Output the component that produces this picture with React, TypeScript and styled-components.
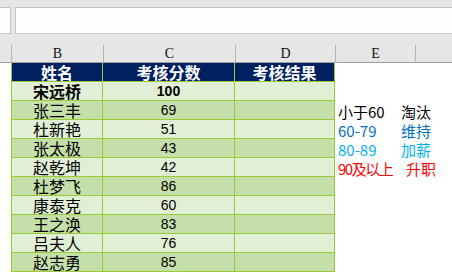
import React from 'react';
import styled, {createGlobalStyle} from 'styled-components';

const GlobalStyle = createGlobalStyle`
    html, body {
        margin: 0;
        padding: 0;
        background: #ffffff;
        overflow: hidden;
    }
    body {
        font-family: "Noto Sans CJK SC", "Liberation Sans", sans-serif;
    }
`

const COLS = '11px 92px 132px 100px 80px 1fr';
const GRID_GREEN = '#9acd32';

const Toolbar = styled.div`
    height: 45px;
    background: #e6e6e6;
    display: flex;
    align-items: flex-start;
    gap: 4px;
    padding-top: 7px;
    box-sizing: border-box;
`

const InputBox = styled.div<{$grow?: boolean}>`
    height: 27px;
    box-sizing: border-box;
    background: #fdfdfd;
    border: 1px solid #c6c6c6;
    ${p => p.$grow ? 'flex: 1; border-right: none;' : 'width: 11px; border-left: none;'}
`

const ColHeader = styled.div`
    display: grid;
    grid-template-columns: ${COLS};
    height: 18px;
    background: #e6e6e6;
    border-bottom: 1px solid #9f9f9f;
    box-sizing: border-box;
`

const ColLetter = styled.div`
    border-left: 1px solid #b4b4b4;
    font-family: "Liberation Serif", "DejaVu Serif", serif;
    font-size: 14px;
    color: #111111;
    text-align: center;
    line-height: 18px;
    &:first-child {
        border-left: none;
    }
`

const Sheet = styled.div`
    display: grid;
    grid-template-columns: ${COLS};
    grid-auto-rows: 19px;
`

const RowHead = styled.div`
    background: #ffffff;
`

const Cell = styled.div<{$head?: boolean; $shade?: boolean; $first?: boolean}>`
    box-sizing: border-box;
    border-right: 1px solid ${GRID_GREEN};
    border-bottom: 1px solid ${GRID_GREEN};
    ${p => p.$first && `border-left: 1px solid ${GRID_GREEN};`}
    background: ${p => p.$head ? '#002060' : p.$shade ? '#c4dfa9' : '#e0efd6'};
    color: ${p => p.$head ? '#ffffff' : '#000000'};
    display: flex;
    align-items: center;
    justify-content: center;
    white-space: nowrap;
    overflow: hidden;
`

const NameText = styled.span<{$bold?: boolean}>`
    font-family: "Noto Sans CJK SC", sans-serif;
    font-size: 16px;
    font-weight: ${p => p.$bold ? 700 : 400};
    line-height: 1;
`

const NumText = styled.span<{$bold?: boolean}>`
    font-family: "Liberation Sans", "DejaVu Sans", sans-serif;
    font-size: 14px;
    font-weight: ${p => p.$bold ? 700 : 400};
    line-height: 1;
`

const Legend = styled.div<{$color: string}>`
    grid-column: span 2;
    display: flex;
    align-items: flex-end;
    padding: 0 0 1px 3px;
    box-sizing: border-box;
    color: ${p => p.$color};
    font-family: "Noto Sans CJK SC", sans-serif;
    font-size: 15px;
    line-height: 1;
    white-space: nowrap;
`

const LegendRange = styled.span<{$tight?: boolean}>`
    display: inline-block;
    min-width: 63px;
    ${p => p.$tight && 'letter-spacing: -1.5px; padding-right: 5px;'}
`

const people = [
    {name: '宋远桥', score: 100},
    {name: '张三丰', score: 69},
    {name: '杜新艳', score: 51},
    {name: '张太极', score: 43},
    {name: '赵乾坤', score: 42},
    {name: '杜梦飞', score: 86},
    {name: '康泰克', score: 60},
    {name: '王之涣', score: 83},
    {name: '吕夫人', score: 76},
    {name: '赵志勇', score: 85},
];

const legend: Record<number, {range: string; label: string; color: string; tight?: boolean}> = {
    1: {range: '小于60', label: '淘汰', color: '#000000'},
    2: {range: '60-79', label: '维持', color: '#0070c0'},
    3: {range: '80-89', label: '加薪', color: '#00b0f0'},
    4: {range: '90及以上', label: '升职', color: '#ff0000', tight: true},
};

export default function App() {
    return (
        <>
            <GlobalStyle/>
            <Toolbar>
                <InputBox/>
                <InputBox $grow/>
            </Toolbar>
            <ColHeader>
                <ColLetter/>
                <ColLetter>B</ColLetter>
                <ColLetter>C</ColLetter>
                <ColLetter>D</ColLetter>
                <ColLetter>E</ColLetter>
                <ColLetter/>
            </ColHeader>
            <Sheet>
                <RowHead/>
                <Cell $head $first><NameText $bold>姓名</NameText></Cell>
                <Cell $head><NameText $bold>考核分数</NameText></Cell>
                <Cell $head><NameText $bold>考核结果</NameText></Cell>
                <Legend $color="#000"/>
                {people.map((p, i) => {
                    const shade = i % 2 === 1;
                    const bold = i === 0;
                    const l = legend[i];
                    return (
                        <React.Fragment key={p.name}>
                            <RowHead/>
                            <Cell $first $shade={shade}><NameText $bold={bold}>{p.name}</NameText></Cell>
                            <Cell $shade={shade}><NumText $bold={bold}>{p.score}</NumText></Cell>
                            <Cell $shade={shade}/>
                            <Legend $color={l ? l.color : '#000'}>
                                {l && <><LegendRange $tight={l.tight}>{l.range}</LegendRange><span>{l.label}</span></>}
                            </Legend>
                        </React.Fragment>
                    );
                })}
            </Sheet>
        </>
    );
}
